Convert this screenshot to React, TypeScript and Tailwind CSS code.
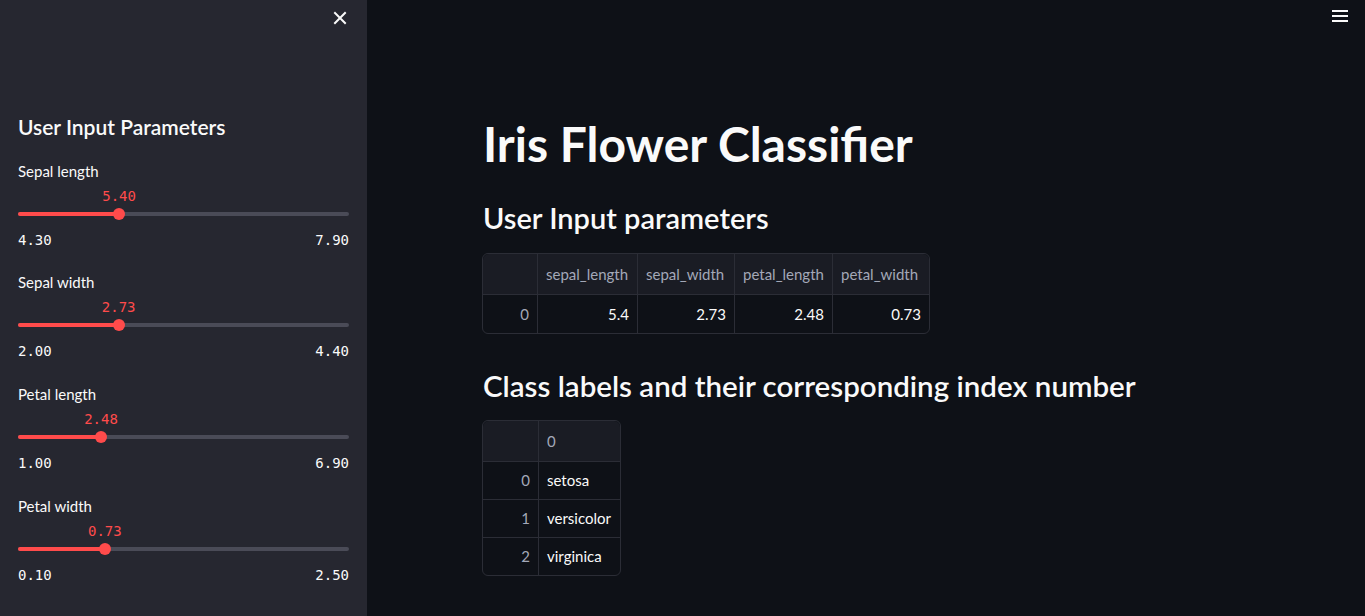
import React from "react";

const sans = { fontFamily: '"Lato", "Noto Sans", sans-serif' };
const mono = { fontFamily: '"DejaVu Sans Mono", monospace' };

function Slider({
  label,
  value,
  min,
  max,
  className,
}: {
  label: string;
  value: number;
  min: number;
  max: number;
  className: string;
}) {
  const pct = ((value - min) / (max - min)) * 100;
  return (
    <div className={"flex flex-col " + className}>
      <div className="h-5 text-[15px] leading-5 text-[#fafafa]">{label}</div>
      <div className="relative mt-[5px] h-5">
        <div
          className="absolute top-0 -translate-x-1/2 text-[14px] leading-5 text-[#ff4b4b]"
          style={{ left: `${pct}%`, ...mono }}
        >
          {value.toFixed(2)}
        </div>
      </div>
      <div className="relative mt-[2px] h-3">
        <div className="absolute left-0 right-0 top-1 h-1 rounded-full bg-[#4a4b57]" />
        <div className="absolute left-0 top-1 h-1 rounded-full bg-[#ff4b4b]" style={{ width: `${pct}%` }} />
        <div
          className="absolute top-0 h-3 w-3 -translate-x-1/2 rounded-full bg-[#ff4b4b]"
          style={{ left: `${pct}%` }}
        />
      </div>
      <div className="mt-[10px] flex h-5 justify-between text-[14px] leading-5 text-[#fafafa]" style={mono}>
        <span>{min.toFixed(2)}</span>
        <span>{max.toFixed(2)}</span>
      </div>
    </div>
  );
}

export default function App() {
  return (
    <div className="flex h-[616px] w-[1365px] overflow-hidden bg-[#0e1117] text-[#fafafa]" style={sans}>
      {/* Sidebar */}
      <aside className="relative flex w-[367px] shrink-0 flex-col bg-[#262730] pl-[18px] pr-[18px]">
        <button className="absolute right-[19px] top-[10px] flex h-4 w-4 items-center justify-center text-[#fafafa]">
          <svg width="14" height="14" viewBox="0 0 14 14" fill="none" stroke="currentColor" strokeWidth="2" strokeLinecap="square">
            <path d="M2 2 L12 12 M12 2 L2 12" />
          </svg>
        </button>
        <h2 className="mt-[113px] h-7 text-[21px] font-semibold leading-7">User Input Parameters</h2>
        <div className="flex flex-col">
          <Slider className="mt-5" label="Sepal length" value={5.4} min={4.3} max={7.9} />
          <Slider className="mt-[22px]" label="Sepal width" value={2.73} min={2.0} max={4.4} />
          <Slider className="mt-[23px]" label="Petal length" value={2.48} min={1.0} max={6.9} />
          <Slider className="mt-[23px]" label="Petal width" value={0.73} min={0.1} max={2.5} />
        </div>
      </aside>

      {/* Main */}
      <main className="relative flex-1 pl-[115px]">
        <button className="absolute right-[17px] top-[10px] flex flex-col gap-[3px]">
          <span className="block h-[2px] w-4 bg-[#fafafa]" />
          <span className="block h-[2px] w-4 bg-[#fafafa]" />
          <span className="block h-[2px] w-4 bg-[#fafafa]" />
        </button>

        <h1 className="ml-px mt-[114px] h-[60px] text-[48px] font-bold leading-[60px]">Iris Flower Classifier</h1>
        <h2 className="ml-px mt-[25px] h-[38px] text-[29px] font-semibold leading-[38px]">User Input parameters</h2>

        <table className="mt-[16px] border-separate border-spacing-0 rounded-md border border-[#2b2d36] text-[15px]">
          <thead>
            <tr className="h-[40px] bg-[#1a1c24] text-[#a3a8b8]">
              <th className="w-[55px] rounded-tl-md border-r border-[#2b2d36] font-normal"></th>
              <th className="w-[100px] border-r border-[#2b2d36] px-2 text-left font-normal">sepal_length</th>
              <th className="w-[97px] border-r border-[#2b2d36] px-2 text-left font-normal">sepal_width</th>
              <th className="w-[98px] border-r border-[#2b2d36] px-2 text-left font-normal">petal_length</th>
              <th className="w-[96px] rounded-tr-md px-2 text-left font-normal">petal_width</th>
            </tr>
          </thead>
          <tbody>
            <tr className="h-[39px]">
              <td className="border-r border-t border-[#2b2d36] px-2 text-right text-[#a3a8b8]">0</td>
              <td className="border-r border-t border-[#2b2d36] px-2 text-right">5.4</td>
              <td className="border-r border-t border-[#2b2d36] px-2 text-right">2.73</td>
              <td className="border-r border-t border-[#2b2d36] px-2 text-right">2.48</td>
              <td className="border-t border-[#2b2d36] px-2 text-right">0.73</td>
            </tr>
          </tbody>
        </table>

        <h2 className="ml-px mt-[33px] h-[38px] text-[29.5px] font-semibold leading-[38px]">
          Class labels and their corresponding index number
        </h2>

        <table className="mt-[15px] border-separate border-spacing-0 rounded-md border border-[#2b2d36] text-[15px]">
          <thead>
            <tr className="h-[40px] bg-[#1a1c24] text-[#a3a8b8]">
              <th className="w-[56px] rounded-tl-md border-r border-[#2b2d36] font-normal"></th>
              <th className="w-[81px] rounded-tr-md px-2 text-left font-normal">0</th>
            </tr>
          </thead>
          <tbody>
            {["setosa", "versicolor", "virginica"].map((name, i) => (
              <tr key={name} className="h-[38px]">
                <td className="border-r border-t border-[#2b2d36] px-2 text-right text-[#a3a8b8]">{i}</td>
                <td className="border-t border-[#2b2d36] px-2 text-left">{name}</td>
              </tr>
            ))}
          </tbody>
        </table>
      </main>
    </div>
  );
}
